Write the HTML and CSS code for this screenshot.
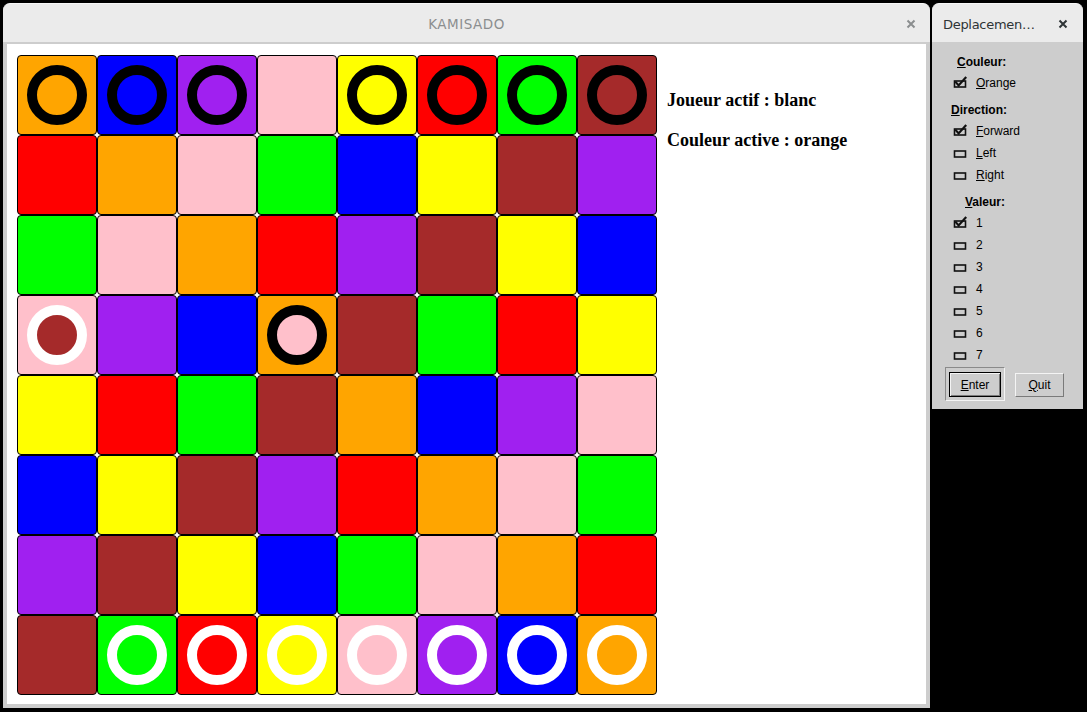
FILE: index.html
```html
<!DOCTYPE html>
<html>
<head>
<meta charset="utf-8">
<title>KAMISADO</title>
<link rel="stylesheet" href="styles.css">
</head>
<body>
<div class="desktop">
  <div class="win main-win">
    <div class="titlebar">
      <span class="title">KAMISADO</span>
      <svg class="close" width="10" height="10" viewBox="0 0 10 10"><path d="M1.5 1.5 L8.5 8.5 M8.5 1.5 L1.5 8.5" stroke="#8b8e8f" stroke-width="2"/></svg>
    </div>
    <div class="frame">
      <div class="content">
        <div class="board">
          <div class="cell c-or"><div class="piece p-black c-or"></div></div>
          <div class="cell c-bl"><div class="piece p-black c-bl"></div></div>
          <div class="cell c-pu"><div class="piece p-black c-pu"></div></div>
          <div class="cell c-pk"></div>
          <div class="cell c-ye"><div class="piece p-black c-ye"></div></div>
          <div class="cell c-re"><div class="piece p-black c-re"></div></div>
          <div class="cell c-gr"><div class="piece p-black c-gr"></div></div>
          <div class="cell c-br"><div class="piece p-black c-br"></div></div>

          <div class="cell c-re"></div>
          <div class="cell c-or"></div>
          <div class="cell c-pk"></div>
          <div class="cell c-gr"></div>
          <div class="cell c-bl"></div>
          <div class="cell c-ye"></div>
          <div class="cell c-br"></div>
          <div class="cell c-pu"></div>

          <div class="cell c-gr"></div>
          <div class="cell c-pk"></div>
          <div class="cell c-or"></div>
          <div class="cell c-re"></div>
          <div class="cell c-pu"></div>
          <div class="cell c-br"></div>
          <div class="cell c-ye"></div>
          <div class="cell c-bl"></div>

          <div class="cell c-pk"><div class="piece p-white c-br"></div></div>
          <div class="cell c-pu"></div>
          <div class="cell c-bl"></div>
          <div class="cell c-or"><div class="piece p-black c-pk"></div></div>
          <div class="cell c-br"></div>
          <div class="cell c-gr"></div>
          <div class="cell c-re"></div>
          <div class="cell c-ye"></div>

          <div class="cell c-ye"></div>
          <div class="cell c-re"></div>
          <div class="cell c-gr"></div>
          <div class="cell c-br"></div>
          <div class="cell c-or"></div>
          <div class="cell c-bl"></div>
          <div class="cell c-pu"></div>
          <div class="cell c-pk"></div>

          <div class="cell c-bl"></div>
          <div class="cell c-ye"></div>
          <div class="cell c-br"></div>
          <div class="cell c-pu"></div>
          <div class="cell c-re"></div>
          <div class="cell c-or"></div>
          <div class="cell c-pk"></div>
          <div class="cell c-gr"></div>

          <div class="cell c-pu"></div>
          <div class="cell c-br"></div>
          <div class="cell c-ye"></div>
          <div class="cell c-bl"></div>
          <div class="cell c-gr"></div>
          <div class="cell c-pk"></div>
          <div class="cell c-or"></div>
          <div class="cell c-re"></div>

          <div class="cell c-br"></div>
          <div class="cell c-gr"><div class="piece p-white c-gr"></div></div>
          <div class="cell c-re"><div class="piece p-white c-re"></div></div>
          <div class="cell c-ye"><div class="piece p-white c-ye"></div></div>
          <div class="cell c-pk"><div class="piece p-white c-pk"></div></div>
          <div class="cell c-pu"><div class="piece p-white c-pu"></div></div>
          <div class="cell c-bl"><div class="piece p-white c-bl"></div></div>
          <div class="cell c-or"><div class="piece p-white c-or"></div></div>
        </div>
        <div class="info">
          <div class="info-line">Joueur actif : blanc</div>
          <div class="info-line">Couleur active : orange</div>
        </div>
      </div>
    </div>
  </div>

  <div class="win dlg">
    <div class="titlebar dlg-titlebar">
      <span class="dlg-title">Deplacemen…</span>
      <svg class="close" width="10" height="10" viewBox="0 0 10 10"><path d="M1.5 1.5 L8.5 8.5 M8.5 1.5 L1.5 8.5" stroke="#2e3436" stroke-width="2"/></svg>
    </div>
    <div class="dlg-body">
      <div class="sec">
        <div class="lbl l-couleur"><u>C</u>ouleur:</div>
        <div class="chk"><svg class="box" width="15" height="12" viewBox="0 0 15 12"><rect x="1.5" y="5" width="11" height="6" fill="none" stroke="#111" stroke-width="1.6"/><path d="M2.3 5.6 L5.6 9.4 L13.2 1" fill="none" stroke="#111" stroke-width="2.2"/></svg><span><u>O</u>range</span></div>
      </div>
      <div class="sec">
        <div class="lbl l-dir"><u>D</u>irection:</div>
        <div class="chk"><svg class="box" width="15" height="12" viewBox="0 0 15 12"><rect x="1.5" y="5" width="11" height="6" fill="none" stroke="#111" stroke-width="1.6"/><path d="M2.3 5.6 L5.6 9.4 L13.2 1" fill="none" stroke="#111" stroke-width="2.2"/></svg><span><u>F</u>orward</span></div>
        <div class="chk"><svg class="box" width="15" height="12" viewBox="0 0 15 12"><rect x="1.5" y="5" width="11" height="6" fill="none" stroke="#111" stroke-width="1.6"/></svg><span><u>L</u>eft</span></div>
        <div class="chk"><svg class="box" width="15" height="12" viewBox="0 0 15 12"><rect x="1.5" y="5" width="11" height="6" fill="none" stroke="#111" stroke-width="1.6"/></svg><span><u>R</u>ight</span></div>
      </div>
      <div class="sec sec-val">
        <div class="lbl l-val"><u>V</u>aleur:</div>
        <div class="chk"><svg class="box" width="15" height="12" viewBox="0 0 15 12"><rect x="1.5" y="5" width="11" height="6" fill="none" stroke="#111" stroke-width="1.6"/><path d="M2.3 5.6 L5.6 9.4 L13.2 1" fill="none" stroke="#111" stroke-width="2.2"/></svg><span>1</span></div>
        <div class="chk"><svg class="box" width="15" height="12" viewBox="0 0 15 12"><rect x="1.5" y="5" width="11" height="6" fill="none" stroke="#111" stroke-width="1.6"/></svg><span>2</span></div>
        <div class="chk"><svg class="box" width="15" height="12" viewBox="0 0 15 12"><rect x="1.5" y="5" width="11" height="6" fill="none" stroke="#111" stroke-width="1.6"/></svg><span>3</span></div>
        <div class="chk"><svg class="box" width="15" height="12" viewBox="0 0 15 12"><rect x="1.5" y="5" width="11" height="6" fill="none" stroke="#111" stroke-width="1.6"/></svg><span>4</span></div>
        <div class="chk"><svg class="box" width="15" height="12" viewBox="0 0 15 12"><rect x="1.5" y="5" width="11" height="6" fill="none" stroke="#111" stroke-width="1.6"/></svg><span>5</span></div>
        <div class="chk"><svg class="box" width="15" height="12" viewBox="0 0 15 12"><rect x="1.5" y="5" width="11" height="6" fill="none" stroke="#111" stroke-width="1.6"/></svg><span>6</span></div>
        <div class="chk"><svg class="box" width="15" height="12" viewBox="0 0 15 12"><rect x="1.5" y="5" width="11" height="6" fill="none" stroke="#111" stroke-width="1.6"/></svg><span>7</span></div>
      </div>
      <div class="buttons">
        <div class="focus-frame"><div class="btn btn-default"><u>E</u>nter</div></div>
        <div class="btn btn-quit"><u>Q</u>uit</div>
      </div>
    </div>
  </div>
</div>
</body>
</html>
```

FILE: styles.css
```css
html, body {
  margin: 0;
  padding: 0;
  background: #000;
  width: 1087px;
  height: 712px;
  overflow: hidden;
}

.desktop {
  display: flex;
  align-items: flex-start;
  padding: 3px 0 0 3px;
}

.win {
  display: flex;
  flex-direction: column;
}

.main-win {
  width: 927px;
  height: 705px;
}

.titlebar {
  flex: none;
  height: 39px;
  background: #ebebeb;
  border-radius: 7px 7px 0 0;
  display: flex;
  align-items: center;
  justify-content: center;
  position: relative;
  font-family: "DejaVu Sans", sans-serif;
  font-size: 13px;
  box-sizing: border-box;
  border-top: 1px solid #f7f7f7;
}

.title {
  color: #8b8e8f;
  font-size: 13.5px;
  letter-spacing: 0.5px;
  padding-top: 2px;
}

.close {
  position: absolute;
  right: 14px;
  top: 15px;
}

.frame {
  flex: 1;
  min-height: 0;
  background: #cdcdcd;
  padding: 2px 4px 4px 4px;
  display: flex;
}

.content {
  flex: 1;
  min-height: 0;
  background: #fff;
  padding: 11px 10px 0 10px;
  display: flex;
  align-items: flex-start;
}

.board {
  display: grid;
  grid-template-columns: repeat(8, 80px);
  grid-template-rows: repeat(8, 80px);
  flex: none;
}

.cell {
  box-sizing: border-box;
  border: 1px solid #000;
  border-radius: 4px;
  display: flex;
  align-items: center;
  justify-content: center;
}

.piece {
  width: 60px;
  height: 60px;
  box-sizing: border-box;
  border-radius: 50%;
  border: 10px solid #000;
}

.p-black { border-color: #000; }
.p-white { border-color: #fff; }

.c-or { background: #ffa500; }
.c-bl { background: #0000ff; }
.c-pu { background: #a020f0; }
.c-pk { background: #ffc0cb; }
.c-ye { background: #ffff00; }
.c-re { background: #ff0000; }
.c-gr { background: #00ff00; }
.c-br { background: #a52a2a; }

.info {
  margin-left: 10px;
  padding-top: 25px;
  font-family: "Liberation Serif", "Times New Roman", serif;
  font-weight: bold;
  font-size: 18px;
  color: #000;
}

.info-line {
  line-height: 40px;
  white-space: nowrap;
}

/* dialog */
.dlg {
  margin-left: 2px;
  width: 151px;
  height: 406px;
}

.dlg-titlebar {
  justify-content: flex-start;
  padding-left: 11px;
}

.dlg-title {
  color: #2e3436;
  letter-spacing: -0.3px;
  padding-top: 2px;
}

.dlg .close {
  right: 15px;
}

.dlg-body {
  flex: 1;
  min-height: 0;
  background: #cdcdcd;
  padding-top: 11px;
  font-family: "Liberation Sans", Arial, sans-serif;
  font-size: 12px;
  color: #000;
  box-sizing: border-box;
}

.sec + .sec {
  margin-top: 7px;
}

.sec-val {
  margin-top: 7px !important;
}

.lbl {
  font-weight: bold;
  height: 19px;
  line-height: 19px;
}

.l-couleur { padding-left: 25px; }
.l-dir { padding-left: 19px; }
.l-val { padding-left: 33px; }

.chk {
  display: flex;
  align-items: flex-start;
  height: 22px;
  line-height: 22px;
  padding-left: 21px;
}

.chk .box {
  flex: none;
  margin-top: 4px;
  margin-right: 8px;
}

.chk span {
  white-space: nowrap;
}

.buttons {
  display: flex;
  align-items: flex-start;
  padding-left: 13px;
  margin-top: 1px;
}

.focus-frame {
  box-sizing: border-box;
  width: 60px;
  height: 34px;
  border: 1px solid;
  border-color: #8a8a8a #f4f4f4 #f4f4f4 #8a8a8a;
  padding: 4px 3px 3px 3px;
}

.btn {
  box-sizing: border-box;
  display: flex;
  align-items: center;
  justify-content: center;
  font-size: 12px;
}

.btn-default {
  width: 52px;
  height: 25px;
  border: 1px solid #000;
  box-shadow: inset 1px 1px 0 #f4f4f4, inset -1px -1px 0 #7a7a7a;
}

.btn-quit {
  margin-left: 10px;
  margin-top: 6px;
  width: 49px;
  height: 24px;
  border: 1px solid;
  border-color: #f4f4f4 #7a7a7a #7a7a7a #f4f4f4;
}
```
